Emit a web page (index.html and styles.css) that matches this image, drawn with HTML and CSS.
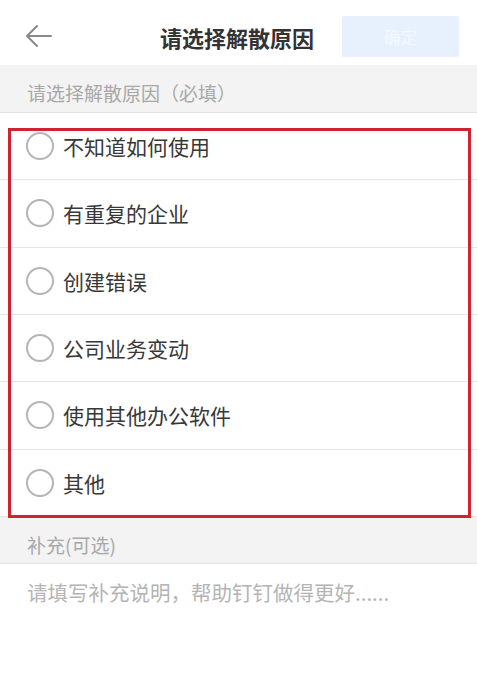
FILE: index.html
```html
<!DOCTYPE html>
<html lang="zh-CN">
<head>
<meta charset="utf-8">
<link rel="stylesheet" href="styles.css">
</head>
<body>
<div class="page">
  <header class="topbar">
    <svg class="back" width="28" height="24" viewBox="0 0 28 24"><path d="M13 2 L3 12 L13 22 M3 12 H27" fill="none" stroke="#8a8a8a" stroke-width="2" stroke-linecap="round" stroke-linejoin="round"/></svg>
    <div class="title">请选择解散原因</div>
    <button class="confirm">确定</button>
  </header>
  <div class="section-label first">请选择解散原因（必填）</div>
  <div class="list">
    <div class="row"><span class="radio"></span><span class="label">不知道如何使用</span></div>
    <div class="row"><span class="radio"></span><span class="label">有重复的企业</span></div>
    <div class="row"><span class="radio"></span><span class="label">创建错误</span></div>
    <div class="row"><span class="radio"></span><span class="label">公司业务变动</span></div>
    <div class="row"><span class="radio"></span><span class="label">使用其他办公软件</span></div>
    <div class="row"><span class="radio"></span><span class="label">其他</span></div>
    <div class="highlight"></div>
  </div>
  <div class="section-label second">补充(可选)</div>
  <div class="placeholder">请填写补充说明，帮助钉钉做得更好......</div>
</div>
</body>
</html>
```
FILE: styles.css
```css
* { box-sizing: border-box; }
html, body { margin: 0; padding: 0; background: #fff; }
body {
  font-family: "Noto Sans CJK SC", "Noto Sans", sans-serif;
  width: 477px;
  height: 693px;
  overflow: hidden;
}
.page { display: flex; flex-direction: column; }
.topbar {
  height: 65px;
  display: flex;
  align-items: center;
  position: relative;
  padding: 0 18px 0 24px;
}
.back { margin-top: 6px; }
.title {
  flex: 1;
  text-align: center;
  font-size: 22px;
  font-weight: 700;
  color: #333;
  margin-left: 104px;
  margin-right: 24px;
  margin-top: 8px;
  white-space: nowrap;
}
.confirm {
  width: 117px;
  height: 41px;
  border: none;
  background: #e6f1fd;
  color: #f4f8fd;
  font-family: inherit;
  font-size: 17px;
  border-radius: 2px;
  margin-top: 8px;
}
.section-label {
  background: #f3f3f3;
  color: #a8a8a8;
  font-size: 19px;
  padding-left: 27px;
  display: flex;
  align-items: center;
  border-bottom: 1px solid #e2e2e2;
}
.section-label.first { height: 48px; padding-top: 8px; }
.section-label.second { height: 47px; padding-top: 10px; }
.list { position: relative; }
.row {
  height: 67.33px;
  display: flex;
  align-items: center;
  padding-left: 26px;
  border-bottom: 1px solid #e6e6e6;
}
.row:last-of-type { border-bottom: none; }
.radio {
  width: 28px;
  height: 28px;
  border: 2px solid #b5b5b5;
  border-radius: 50%;
  margin-right: 9px;
  flex: none;
}
.label {
  font-size: 21px;
  color: #383838;
}
.highlight {
  position: absolute;
  left: 8px;
  top: 15px;
  right: 6px;
  bottom: -1px;
  border: 3px solid #d12232;
  pointer-events: none;
}
.placeholder {
  padding: 13px 0 0 27px;
  font-size: 20.5px;
  color: #b4b4b4;
  white-space: nowrap;
}
```
